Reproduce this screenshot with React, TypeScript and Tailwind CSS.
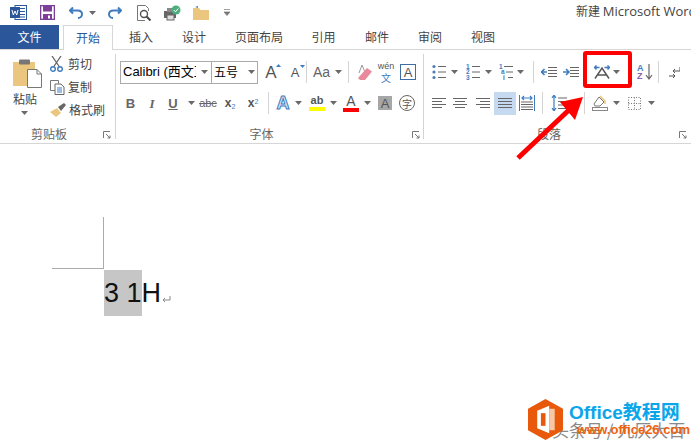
import React from "react";

const Caret = ({ c = "" }: { c?: string }) => (
  <svg width="7" height="4" viewBox="0 0 7 4" className={`shrink-0 ${c}`}><path d="M0 0h7L3.5 4z" fill="#6a6a6a" /></svg>
);
const Sep = ({ h = "h-[22px]" }: { h?: string }) => <div className={`w-px ${h} bg-[#d4d4d4] shrink-0`} />;
const Launcher = () => (
  <svg width="8" height="8" viewBox="0 0 8 8"><path d="M.5 7V.5H7M3 3l4 4M7 4.500V7H4.500" fill="none" stroke="#777" /></svg>
);
const Lines = ({ kind }: { kind: "l" | "c" | "r" | "j" }) => {
  const rows: [number, number][] = {
    l: [[0, 14], [0, 10], [0, 14], [0, 10]],
    c: [[0, 14], [2, 12], [0, 14], [2, 12]],
    r: [[0, 14], [4, 14], [0, 14], [4, 14]],
    j: [[0, 14], [0, 14], [0, 14], [0, 14]],
  }[kind] as [number, number][];
  return (
    <svg width="14" height="12" viewBox="0 0 14 12" className="shrink-0">
      {rows.map((r, i) => <path key={i} d={`M${r[0]} ${1.5 + i * 3}H${r[1]}`} stroke="#666" />)}
    </svg>
  );
};
const ListIcon = ({ labels, indent }: { labels?: string[]; indent?: boolean }) => (
  <svg width="14" height="16" viewBox="0 0 14 16" className="shrink-0">
    {[2.5, 8, 13.5].map((y, i) => (
      <g key={i}>
        {labels ? (
          <text x={indent ? i * 2 : 0} y={y + 2.2} fontSize="6.5" fontWeight="bold" fontFamily="Liberation Sans" fill={indent && i === 2 ? "#666" : "#3f7cbf"}>{labels[i]}</text>
        ) : (
          <circle cx="2" cy={y} r="1.600" fill="#4a7fb5" />
        )}
        <path d={`M${indent ? 5 + i * 2 : 6} ${y}H14`} stroke="#666" />
      </g>
    ))}
  </svg>
);

const T = "text-[#444]";

function QuickBar() {
  return (
    <div className="h-[25px] flex items-center relative">
      <div className="w-[10px]" />
      <svg width="17" height="15" viewBox="0 0 17 15"><rect x="5" y="0.5" width="11.5" height="14" fill="#fff" stroke="#2b579a" /><path d="M10 3.500h5M10 6.500h5M10 9.500h5M10 12h5" stroke="#2b579a" /><rect y="2" width="10" height="11" fill="#2b579a" /><path d="M2 5l1.300 5 1.700-4 1.700 4L8 5" stroke="#fff" fill="none" /></svg>
      <div className="w-[13px]" />
      <svg width="15" height="15" viewBox="0 0 15 15"><rect x=".5" y=".5" width="14" height="14" fill="#fff" stroke="#7d3f98" strokeWidth="1.600" /><rect x="3" y="1" width="9" height="5.500" fill="#7d3f98" /><rect x="3" y="9" width="9" height="5.500" fill="#7d3f98" /><rect x="8" y="10.500" width="2" height="3" fill="#fff" /></svg>
      <div className="w-[14px]" />
      <svg width="15" height="13" viewBox="0 0 15 13"><path d="M4 1.500L1 4.500l3 3M1.500 4.500h7c3 0 4.500 1.700 4.500 3.700S11.500 12 9 12" fill="none" stroke="#3f7cbf" strokeWidth="2" /></svg>
      <div className="w-[5px]" />
      <Caret />
      <div className="w-[11px]" />
      <svg width="15" height="13" viewBox="0 0 15 13"><path d="M11 1.500l3 3-3 3M13.500 4.500h-7C3.500 4.500 2 6.200 2 8.200S3.500 12 6 12" fill="none" stroke="#3f7cbf" strokeWidth="2" /></svg>
      <div className="w-[15px]" />
      <svg width="15" height="16" viewBox="0 0 15 16"><path d="M.5 .5h8l3 3V6M.5 .5v15H8" fill="none" stroke="#777" /><circle cx="7" cy="9" r="3.500" fill="#fff" stroke="#555" strokeWidth="1.400" /><path d="M9.500 11.500l4 4" stroke="#444" strokeWidth="2" /></svg>
      <div className="w-[12px]" />
      <svg width="17" height="16" viewBox="0 0 17 16"><rect x="0" y="6" width="12" height="7" fill="#666" /><rect x="3" y="10" width="7" height="5" fill="#ddd" stroke="#666" /><rect x="3" y="3" width="6" height="4" fill="#888" /><circle cx="12" cy="5" r="4.500" fill="#4fae7d" /><path d="M9.800 5l1.700 1.800 2.800-3.300" stroke="#fff" fill="none" /></svg>
      <div className="w-[12px]" />
      <svg width="16" height="14" viewBox="0 0 16 14"><path d="M0 2h6l1.500 2H16v10H0z" fill="#eac67f" /><path d="M2 1l3-1v2z" fill="#3f7cbf" /></svg>
      <div className="w-[15px]" />
      <svg width="6" height="7" viewBox="0 0 6 7"><path d="M0 .5h6M0 3h6L3 6.500z" stroke="#777" fill="#777" strokeWidth=".7" /></svg>
      <div className={`absolute left-[576px] top-[2px] w-[115px] h-[18px] overflow-hidden whitespace-nowrap text-[12px] leading-[18px] ${T}`}>
        新建 <span className="text-[13px] font-['Open_Sans',sans-serif]">Microsoft Word</span>
      </div>
    </div>
  );
}

function Tabs() {
  const items: [string, string][] = [
    ["插入", "w-[24px] ml-[16px]"], ["设计", "w-[24px] ml-[29px]"], ["页面布局", "w-[48px] ml-[29px]"],
    ["引用", "w-[25px] ml-[28px]"], ["邮件", "w-[24px] ml-[29px]"], ["审阅", "w-[24px] ml-[29px]"], ["视图", "w-[24px] ml-[29px]"],
  ];
  return (
    <div className="h-[25px] flex border-b-[1.500px] border-[#d6d6d6] text-[12px]">
      <div className="w-[59px] h-[24px] bg-[#2b579a] text-white flex items-center justify-center">文件</div>
      <div className="ml-[4px] w-[50px] h-[25px] bg-white border border-b-0 border-[#d6d6d6] text-[#2b579a] flex items-center justify-center">开始</div>
      {items.map(([t, c]) => <div key={t} className={`${c} h-[24px] flex items-center justify-center whitespace-nowrap ${T}`}>{t}</div>)}
    </div>
  );
}

function Clipboard() {
  return (
    <div className="w-[115px] h-[87px] shrink-0 flex flex-col">
      <div className="flex h-[73px]">
        <div className="w-[50px] pl-[13px] pt-[4px] flex flex-col items-start">
          <svg width="29" height="30" viewBox="0 0 29 30"><rect y="4" width="22" height="24" fill="#eac67f" /><rect x="6" y="1.500" width="11" height="5" rx="1" fill="#777" /><path d="M14.500 11.500H24l4.500 4.500v13.500h-14z" fill="#fff" stroke="#777" /><path d="M24 11.500V16h4.500" fill="none" stroke="#777" /></svg>
          <div className={`text-[12px] leading-[15px] mt-[3px] ${T}`}>粘贴</div>
          <Caret c="ml-[8px] mt-[5px]" />
        </div>
        <div className="flex flex-col pt-[2px] text-[12px] gap-[7px]">
          <div className={`flex items-center gap-[5px] h-[16px] ${T}`}>
            <svg width="13" height="16" viewBox="0 0 13 16"><path d="M2 0l7.500 11M11 0L3.500 11" stroke="#666" strokeWidth="1.300" /><circle cx="3" cy="13" r="2.300" fill="none" stroke="#3f7cbf" strokeWidth="1.400" /><circle cx="10" cy="13" r="2.300" fill="none" stroke="#3f7cbf" strokeWidth="1.400" /></svg>
            <span>剪切</span>
          </div>
          <div className={`flex items-center gap-[5px] h-[16px] ${T}`}>
            <svg width="15" height="15" viewBox="0 0 15 15" className="mr-[-2px]"><path d="M.5.500h8v3M.5.500v10H5" fill="none" stroke="#777" /><path d="M5 4h6l3 3v7.500H5z" fill="#fff" stroke="#666" /><path d="M7 8h5M7 10h5M7 12h5" stroke="#3f7cbf" /></svg>
            <span>复制</span>
          </div>
          <div className={`flex items-center gap-[3px] h-[16px] ${T}`}>
            <svg width="16" height="14" viewBox="0 0 16 14"><path d="M0 9l7-4 4 5-5 4z" fill="#eac67f" /><path d="M8 4l6-4 2 2-5 6z" fill="#666" /></svg>
            <span>格式刷</span>
          </div>
        </div>
      </div>
      <div className="relative flex h-[14px] items-center justify-center">
        <span className="text-[12px] text-[#666] mr-[17px]">剪贴板</span>
        <div className="absolute right-[4px] top-[4px]"><Launcher /></div>
      </div>
    </div>
  );
}

const BigA = ({ size = 17, color = "#555" }: { size?: number; color?: string }) => (
  <span className="font-['Liberation_Sans',sans-serif] leading-none" style={{ fontSize: size, color }}>A</span>
);

function FontGroup() {
  return (
    <div className="w-[307px] h-[87px] shrink-0 flex flex-col">
      <div className="h-[36px] flex items-center pl-[4px]">
        <div className="w-[92px] h-[23px] border-[1.500px] border-[#aaa] flex items-center text-[13px] text-black overflow-hidden whitespace-nowrap pl-[2px]">
          <span className="w-[73px] overflow-hidden font-['Liberation_Sans','Noto_Sans_CJK_SC',sans-serif]">Calibri (西文正文)</span>
          <Caret c="ml-[5px]" />
        </div>
        <div className="w-[46px] h-[23px] border-[1.500px] border-l-0 border-[#aaa] flex items-center text-[12px] text-black pl-[2px]">
          <span className="w-[32px]">五号</span><Caret c="ml-[2px]" />
        </div>
        <div className="w-[26px] flex justify-center relative"><BigA size={17} /><svg width="5" height="3" viewBox="0 0 5 3" className="absolute right-[3px] top-0"><path d="M0 3h5L2.500 0z" fill="#3f7cbf" /></svg></div>
        <div className="w-[22px] flex justify-center relative"><BigA size={13} /><svg width="5" height="3" viewBox="0 0 5 3" className="absolute right-[1px] top-[-1px]"><path d="M0 0h5L2.500 3z" fill="#3f7cbf" /></svg></div>
        <Sep />
        <div className="w-[41px] flex items-center justify-center gap-[5px] text-[14px] text-[#666] font-['Liberation_Sans',sans-serif]">Aa<Caret /></div>
        <Sep />
        <div className="w-[29px] flex justify-center">
          <svg width="16" height="16" viewBox="0 0 16 16"><path d="M2 14L11 4l5 3.500-7 8.500H4z" fill="#e98a9c" /><path d="M3 9L6 1l2.500 6" fill="none" stroke="#999" /></svg>
        </div>
        <div className="w-[16px] flex flex-col items-center leading-[11px]">
          <span className="text-[9px] text-[#555] font-['Liberation_Sans',sans-serif]">wén</span>
          <span className="text-[10px] text-[#3f7cbf]">文</span>
        </div>
        <div className="ml-[6px] w-[16px] h-[16px] border border-[#3f6ea5] flex items-center justify-center"><BigA size={13} /></div>
      </div>
      <div className="h-[26px] flex items-center pl-[4px]">
        <div className="w-[21px] text-center font-['Liberation_Sans',sans-serif] font-bold text-[13px] text-[#666] leading-none">B</div>
        <div className="w-[22px] text-center font-['Liberation_Serif',serif] italic font-bold text-[13px] text-[#666] leading-none">I</div>
        <div className="w-[20px] text-center font-['Liberation_Sans',sans-serif] font-bold text-[13px] text-[#666] underline leading-none">U</div>
        <div className="w-[16px] flex justify-center"><Caret /></div>
        <div className="w-[18px] text-center font-['Liberation_Sans',sans-serif] text-[11px] text-[#666] line-through leading-none">abc</div>
        <div className="w-[18px] ml-[4px] text-center font-['Liberation_Sans',sans-serif] font-bold text-[12px] text-[#555] leading-none">x<sub className="text-[7px] text-[#3f7cbf] font-normal">2</sub></div>
        <div className="w-[18px] ml-[5px] text-center font-['Liberation_Sans',sans-serif] font-bold text-[12px] text-[#555] leading-none">x<sup className="text-[7px] text-[#3f7cbf] font-normal">2</sup></div>
        <div className="w-[6px]" /><Sep />
        <div className="w-[22px] ml-[3px] flex justify-center"><span className="text-[18px] leading-none font-bold font-['Liberation_Sans',sans-serif] text-[#dbe7f4] [-webkit-text-stroke:1px_#3f7cbf]">A</span></div>
        <div className="w-[8px] flex justify-center"><Caret /></div>
        <div className="w-[24px] ml-[3px] flex flex-col items-center">
          <span className="text-[11px] leading-[11px] text-[#555] font-['Liberation_Sans',sans-serif] font-bold">ab</span>
          <div className="w-[16px] h-[4px] mt-[1px] bg-[#ffff00]" />
        </div>
        <div className="w-[8px] flex justify-center"><Caret /></div>
        <div className="w-[24px] ml-[2px] flex flex-col items-center">
          <BigA size={14} />
          <div className="w-[16px] h-[4px] bg-[#ff0000]" />
        </div>
        <div className="w-[8px] flex justify-center"><Caret /></div>
        <div className="ml-[7px] w-[14px] h-[14px] bg-[#a6a6a6] flex items-center justify-center"><BigA size={13} /></div>
        <div className="ml-[7px] w-[16px] h-[16px] rounded-full border border-[#666] flex items-center justify-center text-[10px] text-[#555]">字</div>
      </div>
      <div className="relative h-[14px] mt-[11px] flex items-center justify-center">
        <span className="text-[12px] text-[#666] mr-[16px]">字体</span>
        <div className="absolute right-[3px] top-[4px]"><Launcher /></div>
      </div>
    </div>
  );
}

function ParaGroup() {
  return (
    <div className="flex-1 h-[87px] flex flex-col">
      <div className="h-[36px] flex items-center pl-[8px]">
        <ListIcon /><Caret c="ml-[5px]" />
        <div className="w-[8px]" /><ListIcon labels={["1", "2", "3"]} /><Caret c="ml-[5px]" />
        <div className="w-[7px]" /><ListIcon labels={["1", "a", "i"]} indent /><Caret c="ml-[4px]" />
        <div className="w-[9px]" /><Sep />
        <svg width="16" height="12" viewBox="0 0 16 12" className="ml-[7px] shrink-0"><path d="M7 1.500h9M7 4.500h9M7 7.500h9M7 10.500h9" stroke="#666" /><path d="M6 6H1M3.500 3L.5 6l3 3" fill="none" stroke="#3f7cbf" strokeWidth="1.600" /></svg>
        <svg width="16" height="12" viewBox="0 0 16 12" className="ml-[6px] shrink-0"><path d="M7 1.500h9M7 4.500h9M7 7.500h9M7 10.500h9" stroke="#666" /><path d="M0 6h5M3 3l3 3-3 3" fill="none" stroke="#3f7cbf" strokeWidth="1.600" /></svg>
        <svg width="16" height="14" viewBox="0 0 16 14" className="ml-[15px] shrink-0"><path d="M1 13.500L8 3l7 10.500M3.500 10h9" fill="none" stroke="#555" strokeWidth="1.500" /><path d="M.5 2.500h5M2.500 .5l-2 2 2 2M10.500 2.500h5M13.500 .5l2 2-2 2" fill="none" stroke="#3f7cbf" strokeWidth="1.500" /></svg>
        <Caret c="ml-[3px]" />
        <div className="ml-[17px] flex items-center shrink-0">
          <div className="flex flex-col text-[9px] leading-[8px] font-bold font-['Liberation_Sans',sans-serif]"><span className="text-[#3f7cbf]">A</span><span className="text-[#8e5bb5]">Z</span></div>
          <svg width="8" height="16" viewBox="0 0 8 16" className="ml-[1px]"><path d="M4 0v15M1 11l3 4 3-4" fill="none" stroke="#666" strokeWidth="1.200" /></svg>
        </div>
        <div className="w-[5px]" /><Sep />
        <svg width="11" height="13" viewBox="0 0 11 13" className="ml-[10px] shrink-0"><path d="M11 1v4H4M6 3L4 5l2 2M0 10h6M4 8l2 2-2 2" fill="none" stroke="#555" /></svg>
      </div>
      <div className="h-[26px] flex items-center pl-[8px]">
        <Lines kind="l" />
        <div className="w-[7px]" /><Lines kind="c" />
        <div className="w-[9px]" /><Lines kind="r" />
        <div className="ml-[4px] w-[22px] h-[23px] bg-[#c5d9f1] flex items-center justify-center"><Lines kind="j" /></div>
        <svg width="16" height="16" viewBox="0 0 16 16" className="ml-[3px] shrink-0"><path d="M.5 0v16M15.500 0v16" stroke="#3f7cbf" /><path d="M2 7h12M2 9.500h12M2 12h12M2 14.500h12" stroke="#666" /><path d="M3 3h10M5 1L3 3l2 2M11 1l2 2-2 2" fill="none" stroke="#3f7cbf" strokeWidth="1.200" /></svg>
        <div className="w-[7px]" /><Sep />
        <svg width="16" height="16" viewBox="0 0 16 16" className="ml-[8px] shrink-0"><path d="M3 0v16M1 3l2-3 2 3M1 13l2 3 2-3" fill="none" stroke="#3f7cbf" strokeWidth="1.200" /><path d="M7 3h9M7 6.500h9M7 10h9M7 13.500h9" stroke="#666" /></svg>
        <div className="w-[17px]" /><Sep />
        <svg width="16" height="16" viewBox="0 0 16 16" className="ml-[7px] shrink-0"><path d="M2 9l5-7 5 5-4 4H3z" fill="#fff" stroke="#777" /><path d="M8 1l5 5v3" fill="none" stroke="#eac67f" strokeWidth="1.500" /><rect x="0.500" y="12.500" width="15" height="3" fill="#fff" stroke="#888" /></svg>
        <Caret c="ml-[5px]" />
        <svg width="13" height="13" viewBox="0 0 13 13" className="ml-[8px] shrink-0"><path d="M.5 .5h12v12H.5zM6.500 .5v12M.5 6.500h12" fill="none" stroke="#777" strokeDasharray="1 1.500" /></svg>
        <Caret c="ml-[7px]" />
      </div>
      <div className="relative h-[14px] mt-[11px] flex items-center">
        <span className="text-[12px] text-[#666] ml-[113px]">段落</span>
        <div className="absolute right-[4px] top-[4px]"><Launcher /></div>
      </div>
    </div>
  );
}

function Ribbon() {
  return (
    <div className="h-[94px] pt-[4px] flex border-b-[1.500px] border-[#d6d6d6] bg-white">
      <Clipboard />
      <Sep h="h-[85px]" />
      <FontGroup />
      <Sep h="h-[85px]" />
      <ParaGroup />
    </div>
  );
}

function Doc() {
  return (
    <div className="flex-1 relative pt-[73px] bg-white">
      <div className="flex h-[52px] pl-[52px]">
        <div className="w-[52px] h-[52px] border-b border-r border-[#ababab]" />
      </div>
      <div className="pl-[104px] flex items-center h-[46px] mt-[1px] text-[27px] text-[#111] font-['Liberation_Sans',sans-serif]">
        <span className="bg-[#c6c6c6] h-[46px] leading-[46px] whitespace-pre">3 1</span>
        <span className="leading-[46px]">H</span>
        <svg width="9" height="9" viewBox="0 0 9 9" className="mt-[13px] ml-[1px]"><path d="M8 1v4H1M3 3L1 5l2 2" fill="none" stroke="#888" /></svg>
      </div>
      <div className="absolute left-[528px] top-[255px] w-[163px] h-[48px]">
        <div className="absolute left-[24px] top-[19px] text-[17px] leading-[24px] text-[#8a8a8a] whitespace-nowrap">头条号 / 九仄大百</div>
        <svg width="35" height="41" viewBox="0 0 38 42" preserveAspectRatio="none" className="absolute left-0 top-0"><path d="M19 0l19 10v22L19 42 0 32V10z" fill="#e8590c" /><path d="M10 12l13-5v28l-13-5z" fill="#fff" /><path d="M14 14.500h5v13h-5z" fill="#e8590c" /><path d="M23 10h6v22h-6z" fill="#f7c7a6" /></svg>
        <div className="absolute left-[41px] top-[2px] text-[19px] leading-[24px] font-bold text-[#0ba6ea] whitespace-nowrap font-['Liberation_Sans','Noto_Sans_CJK_SC',sans-serif]">Office教程网</div>
        <div className="absolute left-[49px] top-[21px] text-[13px] leading-[20px] font-bold text-[#f0620e] whitespace-nowrap font-['Liberation_Sans',sans-serif]">www.office26.com</div>
      </div>
    </div>
  );
}

export default function App() {
  return (
    <div className="relative w-[691px] h-[448px] overflow-hidden bg-white flex flex-col font-['Noto_Sans_CJK_SC','Liberation_Sans',sans-serif]">
      <QuickBar />
      <Tabs />
      <Ribbon />
      <Doc />
      <div className="absolute left-[583px] top-[51px] w-[49px] h-[37px] border-[4px] border-[#ff0000] rounded-[3px]" />
      <svg width="76" height="72" viewBox="0 0 76 72" className="absolute left-[514px] top-[94px]">
        <path d="M4 64L56 15" stroke="#ff0000" strokeWidth="5" />
        <path d="M46 8L69 3 61 26z" fill="#ff0000" />
      </svg>
    </div>
  );
}
